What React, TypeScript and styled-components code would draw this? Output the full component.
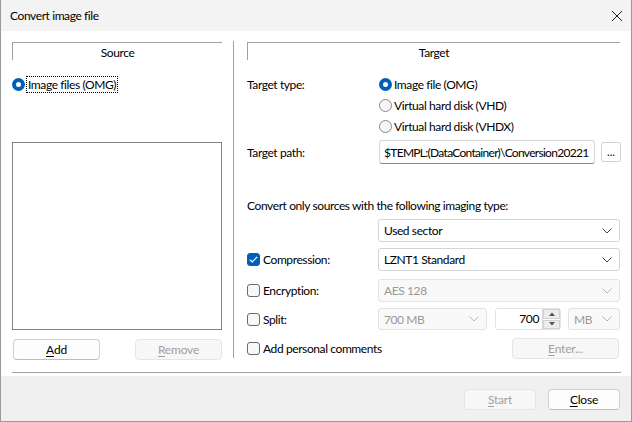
import styled, { createGlobalStyle } from "styled-components";

const GlobalStyle = createGlobalStyle`
  html, body { margin: 0; padding: 0; background: #fff; }
  body {
    font-family: Lato, "Noto Sans", sans-serif;
    font-size: 12px;
    letter-spacing: -0.4px;
    color: #000;
  }
  * { box-sizing: border-box; }
`;

const Window = styled.div`
  width: 632px;
  height: 422px;
  display: flex;
  flex-direction: column;
  border: 1px solid #9a9a9a;
  border-top: none;
  background: #fff;
`;

const TitleBar = styled.div`
  height: 31px;
  flex: none;
  background: #f3f3f3;
  display: flex;
  align-items: center;
  justify-content: space-between;
  padding: 0 8px 0 9px;
  font-size: 12px;
`;

const Body = styled.div`
  padding: 11px 10px 0 11px;
  display: flex;
  flex-direction: column;
`;

const Main = styled.div`
  height: 318px;
  display: flex;
`;

const LeftCol = styled.div`
  width: 210px;
  display: flex;
  flex-direction: column;
`;

const Divider = styled.div`
  width: 1px;
  background: #a0a0a0;
  margin: -1px 13px 2px 11px;
`;

const RightCol = styled.div`
  width: 373px;
  display: flex;
  flex-direction: column;
`;

const GroupHeader = styled.div`
  height: 18px;
  border-top: 1px solid #a0a0a0;
  border-left: 1px solid #a0a0a0;
  display: flex;
  align-items: center;
  justify-content: center;
  padding-top: 1px;
`;

const RadioItem = styled.label<{ $mt?: number }>`
  display: flex;
  align-items: center;
  height: 21px;
  gap: 2px;
  white-space: nowrap;
  margin-top: ${(p) => p.$mt ?? 0}px;
`;

const RadioDot = styled.span<{ $on?: boolean }>`
  width: 13px;
  height: 13px;
  border-radius: 50%;
  flex: none;
  box-sizing: border-box;
  background: ${(p) => (p.$on ? "#fff" : "#f6f6f6")};
  border: ${(p) => (p.$on ? "4px solid #005fb8" : "1px solid #8a8a8a")};
`;

const FocusText = styled.span`
  outline: 1px dotted #000;
  outline-offset: 0;
  padding: 0 1px;
  line-height: 15px;
`;

const ListBox = styled.div`
  height: 188px;
  margin-top: 47px;
  border: 1px solid #828282;
  background: #fff;
`;

const ButtonRow = styled.div<{ $mt?: number }>`
  display: flex;
  justify-content: space-between;
  padding-left: 1px;
  margin-top: ${(p) => p.$mt ?? 0}px;
`;

const Btn = styled.button<{ $w: number; $disabled?: boolean }>`
  width: ${(p) => p.$w}px;
  height: 21px;
  padding: 0;
  font: inherit;
  font-size: 12px;
  letter-spacing: -0.2px;
  border-radius: 4px;
  border: 1px solid ${(p) => (p.$disabled ? "#e5e5e5" : "#d0d0d0")};
  border-bottom-color: ${(p) => (p.$disabled ? "#e5e5e5" : "#bdbdbd")};
  background: ${(p) => (p.$disabled ? "#f7f7f7" : "#fdfdfd")};
  color: ${(p) => (p.$disabled ? "#a0a0a0" : "#000")};
  display: flex;
  align-items: center;
  justify-content: center;
  u { text-decoration: underline; text-underline-offset: 2px; }
`;

const Row = styled.div<{ $mt?: number }>`
  display: grid;
  grid-template-columns: 131px 1fr;
  align-items: center;
  margin-top: ${(p) => p.$mt ?? 0}px;
`;

const RowLabel = styled.div<{ $top?: boolean }>`
  align-self: ${(p) => (p.$top ? "start" : "center")};
  line-height: 21px;
  white-space: nowrap;
`;

const RadioGroup = styled.div`
  display: flex;
  flex-direction: column;
  padding-left: 1px;
`;

const PathWrap = styled.div`
  display: flex;
  align-items: center;
  gap: 6px;
  padding-left: 1px;
`;

const TextInput = styled.div`
  width: 216px;
  height: 24px;
  border: 1px solid #d6d6d6;
  border-bottom-color: #8a8a8a;
  border-radius: 3px;
  padding: 0 3px 0 4px;
  display: flex;
  align-items: center;
  overflow: hidden;
  white-space: nowrap;
  letter-spacing: -0.7px;
`;

const DotsBtn = styled.div`
  width: 20px;
  height: 20px;
  border: 1px solid #d0d0d0;
  border-radius: 3px;
  display: flex;
  align-items: flex-end;
  justify-content: center;
  padding-bottom: 4px;
  font-size: 11px;
  letter-spacing: 0;
  line-height: 1;
`;

const Caption = styled.div`
  margin-top: 34px;
  height: 16px;
  line-height: 16px;
  white-space: nowrap;
`;

const SelectBox = styled.div<{ $w?: number; $disabled?: boolean; $h?: number }>`
  width: ${(p) => (p.$w ? `${p.$w}px` : "100%")};
  height: ${(p) => p.$h ?? 23}px;
  flex: none;
  border: 1px solid ${(p) => (p.$disabled ? "#e3e3e3" : "#d4d4d4")};
  border-radius: 3px;
  background: ${(p) => (p.$disabled ? "#f9f9f9" : "#fff")};
  color: ${(p) => (p.$disabled ? "#9a9a9a" : "#000")};
  display: flex;
  align-items: center;
  justify-content: space-between;
  padding: 0 7px 0 5px;
  white-space: nowrap;
  svg { flex: none; }
`;

const CheckItem = styled.div`
  display: flex;
  align-items: center;
  gap: 3px;
  white-space: nowrap;
`;

const CheckBox = styled.span<{ $on?: boolean }>`
  width: 13px;
  height: 13px;
  border-radius: 3px;
  flex: none;
  display: flex;
  align-items: center;
  justify-content: center;
  background: ${(p) => (p.$on ? "#005fb8" : "#f8f8f8")};
  border: 1px solid ${(p) => (p.$on ? "#005fb8" : "#6a6a6a")};
`;

const SplitControls = styled.div`
  display: flex;
  align-items: center;
  gap: 7px;
`;

const NumberBox = styled.div`
  width: 66px;
  height: 22px;
  flex: none;
  border: 1px solid #e3e3e3;
  border-radius: 3px;
  display: flex;
  align-items: stretch;
  background: #fff;
  margin-left: 1px;
`;

const NumberValue = styled.div`
  flex: 1;
  text-align: right;
  padding-right: 3px;
  line-height: 19px;
`;

const Spinner = styled.div`
  width: 18px;
  display: flex;
  flex-direction: column;
  border-left: 1px solid #d8d8d8;
`;

const SpinPart = styled.div<{ $down?: boolean }>`
  flex: 1;
  background: #ececec;
  border: 1px solid #d2d2d2;
  display: flex;
  align-items: center;
  justify-content: center;
  margin-bottom: ${(p) => (p.$down ? 0 : 1)}px;
`;

const EnterRow = styled.div`
  display: flex;
  align-items: center;
  justify-content: space-between;
  margin-top: 8px;
  padding-right: 1px;
`;

const HLine = styled.div`
  height: 1px;
  background: #a0a0a0;
  margin: 12px 0 3px 0;
`;

const Footer = styled.div`
  flex: 1;
  background: #f0f0f0;
  display: flex;
  justify-content: flex-end;
  align-items: flex-start;
  gap: 12px;
  padding: 13px 11px 0 0;
`;

function Chevron({ color = "#444" }: { color?: string }) {
  return (
    <svg width="10" height="6" viewBox="0 0 10 6">
      <polyline points="0.5,0.5 5,5 9.5,0.5" fill="none" stroke={color} strokeWidth="1" />
    </svg>
  );
}

function Check() {
  return (
    <svg width="9" height="7" viewBox="0 0 9 7">
      <polyline points="0.8,3.6 3.2,6 8.2,0.8" fill="none" stroke="#fff" strokeWidth="1.2" />
    </svg>
  );
}

function Tri({ up }: { up?: boolean }) {
  return (
    <svg width="6" height="4" viewBox="0 0 6 4">
      <polygon points={up ? "0,4 3,0.5 6,4" : "0,0 3,3.5 6,0"} fill="#555" />
    </svg>
  );
}

export default function App() {
  return (
    <>
      <GlobalStyle />
      <Window>
        <TitleBar>
          <span>Convert image file</span>
          <svg width="12" height="12" viewBox="0 0 12 12">
            <path d="M1 1 L11 11 M11 1 L1 11" stroke="#222" strokeWidth="1" />
          </svg>
        </TitleBar>
        <Body>
          <Main>
            <LeftCol>
              <GroupHeader>Source</GroupHeader>
              <RadioItem $mt={14}>
                <RadioDot $on />
                <FocusText>Image files (OMG)</FocusText>
              </RadioItem>
              <ListBox />
              <ButtonRow $mt={9}>
                <Btn $w={87}>
                  <span>
                    <u>A</u>dd
                  </span>
                </Btn>
                <Btn $w={87} $disabled>
                  <span>
                    <u>R</u>emove
                  </span>
                </Btn>
              </ButtonRow>
            </LeftCol>
            <Divider />
            <RightCol>
              <GroupHeader>Target</GroupHeader>
              <Row $mt={14}>
                <RowLabel $top>Target type:</RowLabel>
                <RadioGroup>
                  <RadioItem>
                    <RadioDot $on />
                    <span>Image file (OMG)</span>
                  </RadioItem>
                  <RadioItem>
                    <RadioDot />
                    <span>Virtual hard disk (VHD)</span>
                  </RadioItem>
                  <RadioItem>
                    <RadioDot />
                    <span>Virtual hard disk (VHDX)</span>
                  </RadioItem>
                </RadioGroup>
              </Row>
              <Row $mt={3}>
                <RowLabel>Target path:</RowLabel>
                <PathWrap>
                  <TextInput>$TEMPL:(DataContainer)\Conversion20221</TextInput>
                  <DotsBtn>...</DotsBtn>
                </PathWrap>
              </Row>
              <Caption>Convert only sources with the following imaging type:</Caption>
              <Row $mt={5}>
                <div />
                <SelectBox>
                  <span>Used sector</span>
                  <Chevron />
                </SelectBox>
              </Row>
              <Row $mt={6}>
                <CheckItem>
                  <CheckBox $on>
                    <Check />
                  </CheckBox>
                  <span>Compression:</span>
                </CheckItem>
                <SelectBox>
                  <span>LZNT1 Standard</span>
                  <Chevron />
                </SelectBox>
              </Row>
              <Row $mt={8}>
                <CheckItem>
                  <CheckBox />
                  <span>Encryption:</span>
                </CheckItem>
                <SelectBox $disabled>
                  <span>AES 128</span>
                  <Chevron color="#b5b5b5" />
                </SelectBox>
              </Row>
              <Row $mt={6}>
                <CheckItem>
                  <CheckBox />
                  <span>Split:</span>
                </CheckItem>
                <SplitControls>
                  <SelectBox $w={109} $h={22} $disabled>
                    <span>700 MB</span>
                    <Chevron color="#b5b5b5" />
                  </SelectBox>
                  <NumberBox>
                    <NumberValue>700</NumberValue>
                    <Spinner>
                      <SpinPart>
                        <Tri up />
                      </SpinPart>
                      <SpinPart $down>
                        <Tri />
                      </SpinPart>
                    </Spinner>
                  </NumberBox>
                  <SelectBox $w={52} $h={22} $disabled>
                    <span>MB</span>
                    <Chevron color="#b5b5b5" />
                  </SelectBox>
                </SplitControls>
              </Row>
              <EnterRow>
                <CheckItem>
                  <CheckBox />
                  <span>Add personal comments</span>
                </CheckItem>
                <Btn $w={107} $disabled>
                  <span>
                    <u>E</u>nter...
                  </span>
                </Btn>
              </EnterRow>
            </RightCol>
          </Main>
          <HLine />
        </Body>
        <Footer>
          <Btn $w={72} $disabled>
            <span>
              <u>S</u>tart
            </span>
          </Btn>
          <Btn $w={72}>
            <span>
              <u>C</u>lose
            </span>
          </Btn>
        </Footer>
      </Window>
    </>
  );
}
